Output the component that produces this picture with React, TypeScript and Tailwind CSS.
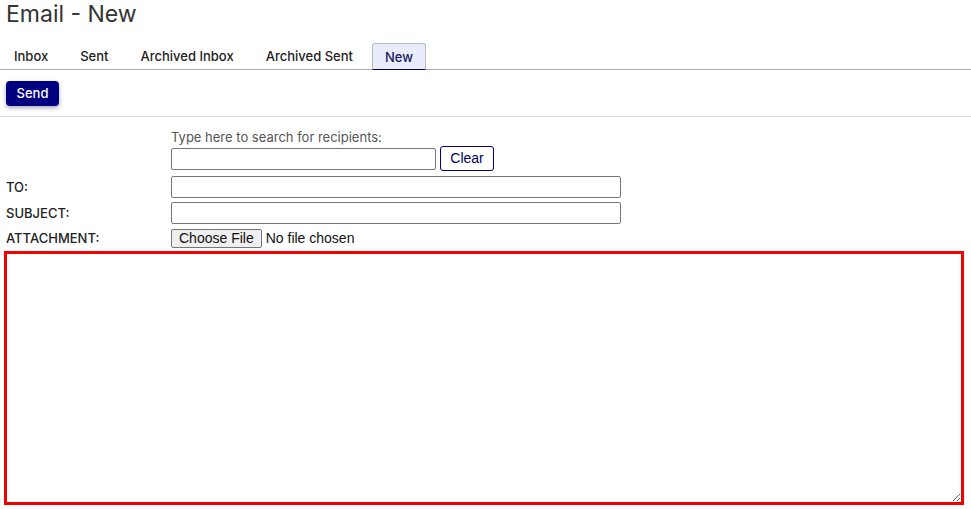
import React, { useState } from 'react';

const TABS = ['Inbox', 'Sent', 'Archived Inbox', 'Archived Sent', 'New'];

const App: React.FC = () => {
  const [active, setActive] = useState('New');
  const [search, setSearch] = useState('');

  return (
    <div className="min-h-screen bg-white text-[#222] font-[Inter,sans-serif]">
      <h1 className="pl-[6px] pt-[1px] text-[23px] leading-[27px] text-[#333] font-normal">Email - New</h1>

      {/* tab strip */}
      <div className="mt-[14px] flex items-end gap-[6px] border-b border-[#aaa] pl-[1px]">
        {TABS.map(tab =>
          tab === active ? (
            <button
              key={tab}
              onClick={() => setActive(tab)}
              className="h-[27px] px-[12px] pt-[2px] text-[13px] font-medium text-[#1a1a5e] bg-[#e8ecfc] border border-[#bbb] border-b-[#000066] rounded-t-[3px] -mb-[1px]"
            >
              {tab}
            </button>
          ) : (
            <button key={tab} onClick={() => setActive(tab)} className="h-[27px] px-[13px] pt-[2px] text-[13px] font-medium text-[#222]">
              {tab}
            </button>
          )
        )}
      </div>

      <div className="pl-[6px] pt-[10px] pb-[10px] border-b border-[#ddd]">
        <button className="h-[25px] w-[53px] rounded-[4px] bg-[#000080] text-white text-[13px] font-medium shadow-[0_2px_4px_rgba(0,0,60,0.35)]">
          Send
        </button>
      </div>

      <div className="grid grid-cols-[165px_1fr] pl-[6px] pt-[12px] text-[13px] font-medium">
        <div />
        <div className="text-[#555] leading-[16px] text-[13px] font-normal">Type here to search for recipients:</div>

        <div />
        <div className="flex items-center gap-[4px] mt-[1px]">
          <input
            value={search}
            onChange={e => setSearch(e.target.value)}
            className="h-[22px] w-[265px] border border-[#767676] rounded-[2px] px-1"
          />
          <button
            onClick={() => setSearch('')}
            className="h-[25px] w-[54px] border border-[#000080] rounded-[3px] bg-white text-[#000066] text-[14px] font-normal font-['Liberation_Sans',Arial,sans-serif]"
          >
            Clear
          </button>
        </div>

        <label className="mt-[5px] h-[22px] flex items-center">TO:</label>
        <input className="mt-[5px] h-[22px] w-[450px] border border-[#767676] rounded-[2px] px-1" />

        <label className="mt-[4px] h-[22px] flex items-center">SUBJECT:</label>
        <input className="mt-[4px] h-[22px] w-[450px] border border-[#767676] rounded-[2px] px-1" />

        <label className="mt-[5px] h-[19px] flex items-center">ATTACHMENT:</label>
        <div className="mt-[5px] h-[19px] flex items-center gap-[4px] text-[14px] font-normal font-['Liberation_Sans',Arial,sans-serif]">
          <span className="h-[19px] px-[7px] flex items-center border border-[#767676] rounded-[2px] bg-[#efefef] text-[#111]">
            Choose File
          </span>
          <span className="text-[#111]">No file chosen</span>
        </div>
      </div>

      <div className="pl-[4px] pt-[3px]">
        <textarea className="block h-[254px] w-[960px] border-[3px] border-[#e00] outline-none" />
      </div>
    </div>
  );
};

export default App;
